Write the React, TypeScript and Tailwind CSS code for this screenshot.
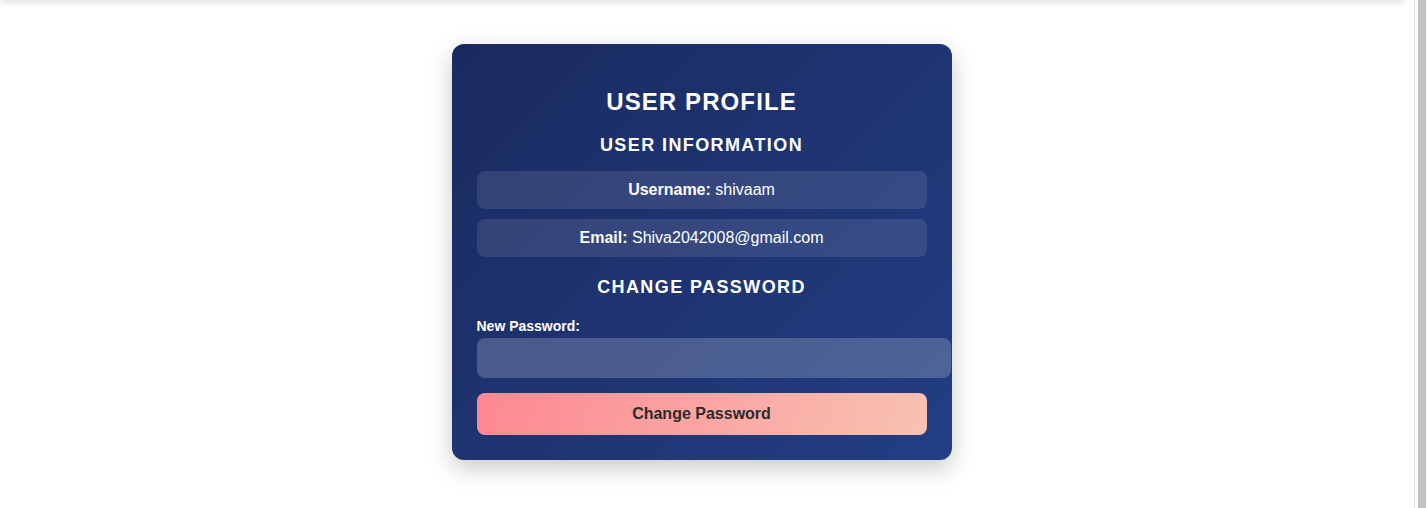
import React from "react";

export default function App() {
  return (
    <div
      className="flex h-[508px] w-[1428px] overflow-hidden bg-white"
      style={{ fontFamily: '"Liberation Sans", Arial, Helvetica, sans-serif' }}
    >
      <div className="relative w-[1414px] h-full">
        <div className="absolute left-0 top-[-10px] h-[10px] w-[1404px] bg-white shadow-[0_1px_8px_rgba(0,0,0,0.18)]" />
        <div className="flex justify-center pt-[44px] pr-[11px]">
          <div className="w-[500px] rounded-[12px] bg-[linear-gradient(135deg,#1a2a5f_0%,#233e84_100%)] px-[25px] pt-[44px] pb-[25px] text-white shadow-[0_8px_24px_rgba(0,0,0,0.22)]">
            <h1 className="text-center text-[24px] leading-[28px] font-bold tracking-[1.1px] uppercase">
              User Profile
            </h1>
            <h2 className="mt-[18px] text-center text-[18px] leading-[22px] font-bold tracking-[1.4px] uppercase">
              User Information
            </h2>
            <div className="mt-[15px] flex flex-col gap-[10px]">
              <div className="h-[38px] rounded-[8px] bg-white/10 flex items-center justify-center text-[16px] leading-[18px]">
                <span className="font-bold">Username:</span>
                <span>&nbsp;shivaam</span>
              </div>
              <div className="h-[38px] rounded-[8px] bg-white/10 flex items-center justify-center text-[16px] leading-[18px]">
                <span className="font-bold">Email:</span>
                <span>&nbsp;Shiva2042008@gmail.com</span>
              </div>
            </div>
            <h2 className="mt-[19px] text-center text-[18px] leading-[22px] font-bold tracking-[1.4px] uppercase">
              Change Password
            </h2>
            <label className="mt-[20px] block text-[14px] leading-[16px] font-bold">
              New Password:
            </label>
            <input
              type="password"
              className="mt-[4px] block h-[40px] w-[474px] rounded-[8px] bg-white/20 px-[12px] text-[16px] text-white outline-none border-0"
            />
            <button className="mt-[15px] block h-[42px] w-full rounded-[8px] bg-[linear-gradient(100deg,#fd8892_0%,#f8c2b2_100%)] text-[16px] font-bold text-[#2b2b2b]">
              Change Password
            </button>
          </div>
        </div>
      </div>
      <div className="flex w-[14px] h-full border-l border-[#e6e6e6] bg-[#fafafa] pl-[3px]">
        <div className="w-[8px] h-full bg-[#c2c2c2]" />
      </div>
    </div>
  );
}
